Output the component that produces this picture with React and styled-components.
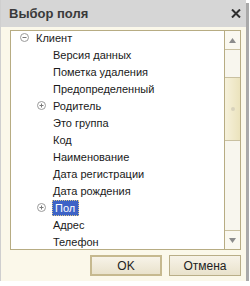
import React from "react";
import styled, { createGlobalStyle } from "styled-components";

const Global = createGlobalStyle`
  html, body { margin: 0; padding: 0; background: #ffffff; }
  body { font-family: "Liberation Sans", Arial, sans-serif; }
`;

const Window = styled.div`
  width: 246px;
  height: 281px;
  background: #fbf8ea;
  border-left: 1px solid #cfcfcf;
  box-sizing: border-box;
  box-shadow: 3px 3px 0 #a9a9a9;
  display: flex;
  flex-direction: column;
`;

const TitleBar = styled.div`
  height: 27px;
  flex: none;
  background: #d6d6d6;
  display: flex;
  align-items: center;
  justify-content: space-between;
  padding: 0 5px 0 8px;
`;

const Title = styled.div`
  font-family: "Liberation Sans", Arial, sans-serif;
  font-weight: bold;
  font-size: 13px;
  color: #3a3a3a;
`;

const Close = styled.svg`
  width: 10px;
  height: 9px;
  display: block;
`;

const Body = styled.div`
  flex: 1;
  display: flex;
  flex-direction: column;
  padding: 3px 5px 0 9px;
`;

const TreeBox = styled.div`
  height: 220px;
  flex: none;
  box-sizing: border-box;
  border: 1px solid #b7ac83;
  background: #ffffff;
  display: flex;
  overflow: hidden;
`;

const List = styled.div`
  flex: 1;
  display: flex;
  flex-direction: column;
  margin-top: -2px;
`;

const Row = styled.div`
  height: 17px;
  flex: none;
  display: flex;
  align-items: center;
  padding-left: ${(p) => 9 + p.$level * 17}px;
  font-size: 11px;
  color: #1a1a1a;
`;

const Toggle = styled.svg`
  width: 9px;
  height: 9px;
  flex: none;
  margin-right: 7px;
  visibility: ${(p) => (p.$hidden ? "hidden" : "visible")};
`;

const Label = styled.span`
  line-height: 16px;
  padding: 0 2px;
  margin-left: -2px;
  ${(p) =>
    p.$selected &&
    `
    padding: 0 4px 0 3px;
    margin-left: -1px;
    background: #3d63c6;
    color: #ffffff;
    outline: 1px dotted #d8c98f;
    outline-offset: -1px;
  `}
`;

const ScrollBar = styled.div`
  width: 15px;
  flex: none;
  border-left: 1px solid #b7ac83;
  background: #f8f6ee;
  display: flex;
  flex-direction: column;
`;

const ArrowBtn = styled.div`
  height: 18px;
  flex: none;
  background: #faf8f0;
  display: flex;
  align-items: center;
  justify-content: center;
  border-${(p) => (p.$down ? "top" : "bottom")}: 1px solid #c9c0a0;
`;

const Track = styled.div`
  flex: 1;
  display: flex;
  flex-direction: column;
`;

const TrackSpace = styled.div`
  height: ${(p) => p.$h}px;
  flex: none;
`;

const Thumb = styled.div`
  height: 64px;
  flex: none;
  box-sizing: border-box;
  border-top: 1px solid #c9c0a0;
  border-bottom: 1px solid #c9c0a0;
  background: linear-gradient(to right, #f6f1db, #ebe3bd);
  display: flex;
  align-items: center;
  justify-content: center;
`;

const Grip = styled.div`
  width: 4px;
  height: 4px;
  border-radius: 50%;
  background: #d8d2bc;
`;

const Buttons = styled.div`
  display: flex;
  justify-content: flex-end;
  gap: 7px;
  margin-top: 5px;
  padding-right: 0;
`;

const Button = styled.button`
  width: 72px;
  height: 21px;
  box-sizing: border-box;
  font-family: "Liberation Sans", Arial, sans-serif;
  font-size: 12px;
  color: #222;
  padding: 0;
  background: linear-gradient(to bottom, #f7f3e8, #e9e2cc);
  border: 1px solid #b9ae88;
  ${(p) =>
    p.$default &&
    `
    border: 2px solid #c6b98f;
  `}
`;

const Minus = () => (
  <Toggle viewBox="0 0 9 9">
    <circle cx="4.5" cy="4.5" r="4" fill="#fff" stroke="#9a9a9a" strokeWidth="1" />
    <line x1="2.5" y1="4.5" x2="6.5" y2="4.5" stroke="#7a7a7a" strokeWidth="1" />
  </Toggle>
);

const Plus = () => (
  <Toggle viewBox="0 0 9 9">
    <circle cx="4.5" cy="4.5" r="4" fill="#fff" stroke="#9a9a9a" strokeWidth="1" />
    <line x1="2.5" y1="4.5" x2="6.5" y2="4.5" stroke="#7a7a7a" strokeWidth="1" />
    <line x1="4.5" y1="2.5" x2="4.5" y2="6.5" stroke="#7a7a7a" strokeWidth="1" />
  </Toggle>
);

const Empty = () => <Toggle $hidden viewBox="0 0 9 9" />;

const rows = [
  { t: "Клиент", l: 0, k: "minus" },
  { t: "Версия данных", l: 1 },
  { t: "Пометка удаления", l: 1 },
  { t: "Предопределенный", l: 1 },
  { t: "Родитель", l: 1, k: "plus" },
  { t: "Это группа", l: 1 },
  { t: "Код", l: 1 },
  { t: "Наименование", l: 1 },
  { t: "Дата регистрации", l: 1 },
  { t: "Дата рождения", l: 1 },
  { t: "Пол", l: 1, k: "plus", sel: true },
  { t: "Адрес", l: 1 },
  { t: "Телефон", l: 1 },
  { t: "", l: 1 },
];

export default function App() {
  return (
    <>
      <Global />
      <Window>
        <TitleBar>
          <Title>Выбор поля</Title>
          <Close viewBox="0 0 10 9">
            <path d="M1 0.5 L9 8.5 M9 0.5 L1 8.5" stroke="#2e2e2e" strokeWidth="2" />
          </Close>
        </TitleBar>
        <Body>
          <TreeBox>
            <List>
              {rows.map((r, i) => (
                <Row key={i} $level={r.l}>
                  {r.k === "minus" ? <Minus /> : r.k === "plus" ? <Plus /> : <Empty />}
                  <Label $selected={r.sel}>{r.t}</Label>
                </Row>
              ))}
            </List>
            <ScrollBar>
              <ArrowBtn>
                <svg width="7" height="5" viewBox="0 0 7 5">
                  <path d="M3.5 0 L7 5 L0 5 Z" fill="#8c8c8c" />
                </svg>
              </ArrowBtn>
              <Track>
                <TrackSpace $h={27} />
                <Thumb>
                  <Grip />
                </Thumb>
              </Track>
              <ArrowBtn $down>
                <svg width="7" height="5" viewBox="0 0 7 5">
                  <path d="M0 0 L7 0 L3.5 5 Z" fill="#8c8c8c" />
                </svg>
              </ArrowBtn>
            </ScrollBar>
          </TreeBox>
          <Buttons>
            <Button $default>OK</Button>
            <Button>Отмена</Button>
          </Buttons>
        </Body>
      </Window>
    </>
  );
}
